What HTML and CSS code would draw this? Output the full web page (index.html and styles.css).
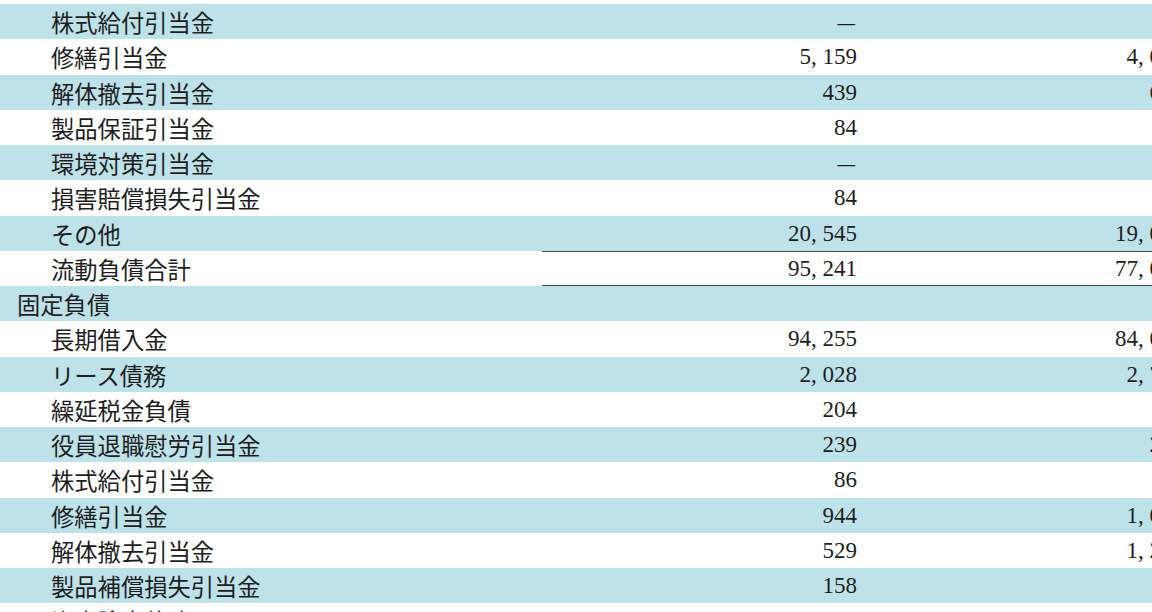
FILE: index.html
```html
<!DOCTYPE html>
<html lang="ja">
<head>
<meta charset="utf-8">
<title>負債の部</title>
<link rel="stylesheet" href="styles.css">
</head>
<body>
<div class="sheet">
  <div class="row shade"><div class="label">株式給付引当金</div><div class="num"><span class="dash">—</span></div><div class="num"><span class="dash">—</span></div></div>
  <div class="row"><div class="label">修繕引当金</div><div class="num">5, 159</div><div class="num">4, 012</div></div>
  <div class="row shade"><div class="label">解体撤去引当金</div><div class="num">439</div><div class="num">612</div></div>
  <div class="row"><div class="label">製品保証引当金</div><div class="num">84</div><div class="num">80</div></div>
  <div class="row shade"><div class="label">環境対策引当金</div><div class="num"><span class="dash">—</span></div><div class="num">15</div></div>
  <div class="row"><div class="label">損害賠償損失引当金</div><div class="num">84</div><div class="num">13</div></div>
  <div class="row shade"><div class="label">その他</div><div class="num">20, 545</div><div class="num">19, 043</div></div>
  <div class="row total"><div class="label">流動負債合計</div><div class="num ruled">95, 241</div><div class="num ruled">77, 068</div></div>
  <div class="row shade"><div class="label head">固定負債</div><div class="num"></div><div class="num"></div></div>
  <div class="row"><div class="label">長期借入金</div><div class="num">94, 255</div><div class="num">84, 050</div></div>
  <div class="row shade"><div class="label">リース債務</div><div class="num">2, 028</div><div class="num">2, 715</div></div>
  <div class="row"><div class="label">繰延税金負債</div><div class="num">204</div><div class="num">91</div></div>
  <div class="row shade"><div class="label">役員退職慰労引当金</div><div class="num">239</div><div class="num">231</div></div>
  <div class="row"><div class="label">株式給付引当金</div><div class="num">86</div><div class="num">87</div></div>
  <div class="row shade"><div class="label">修繕引当金</div><div class="num">944</div><div class="num">1, 022</div></div>
  <div class="row"><div class="label">解体撤去引当金</div><div class="num">529</div><div class="num">1, 246</div></div>
  <div class="row shade"><div class="label">製品補償損失引当金</div><div class="num">158</div><div class="num">74</div></div>
  <div class="row"><div class="label">資産除去債務</div><div class="num">312</div><div class="num">305</div></div>
</div>
</body>
</html>
```
FILE: styles.css
```css
html, body {
  margin: 0;
  padding: 0;
  overflow: hidden;
  background: #ffffff;
}
.sheet {
  width: 1184px;
  padding-top: 4px;
  color: #1e1e1e;
}
.row {
  display: grid;
  grid-template-columns: 542px 315px 327px;
  height: 35.25px;
  line-height: 35.25px;
}
.shade {
  background: #bee2ea;
}
.label {
  font-family: "Noto Sans CJK JP", "Noto Sans", sans-serif;
  font-size: 23.3px;
  padding-left: 51px;
  padding-top: 2px;
  line-height: 33.25px;
  white-space: nowrap;
}
.label.head {
  padding-left: 17px;
}
.num {
  font-family: "Liberation Serif", serif;
  font-size: 23px;
  text-align: right;
  white-space: nowrap;
}
.dash {
  font-size: 17.5px;
  font-weight: bold;
  padding-right: 2px;
}
.ruled {
  box-shadow: inset 0 1px 0 #4a4a4a, inset 0 -1px 0 #4a4a4a;
}
```
